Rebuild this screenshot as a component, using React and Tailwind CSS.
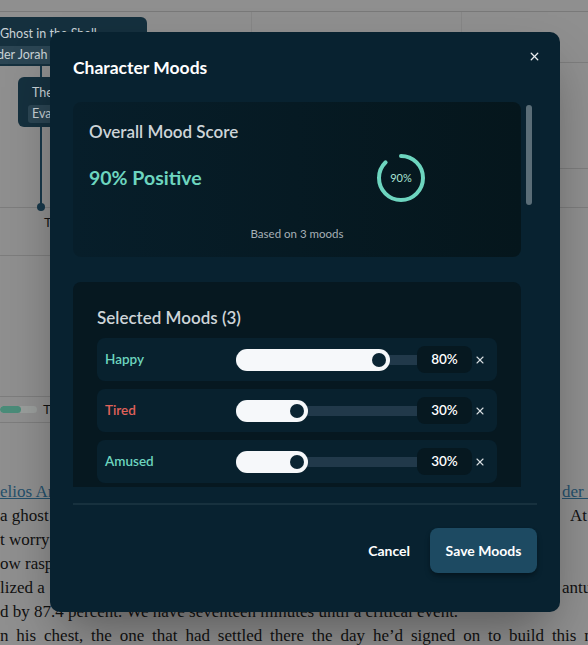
import { X } from 'lucide-react'

const MOODS = [
  { name: 'Happy', value: 80, color: 'text-[#6dd5bf]' },
  { name: 'Tired', value: 30, color: 'text-[#e0625a]' },
  { name: 'Amused', value: 30, color: 'text-[#6dd5bf]' },
]

function ScoreRing({ value }) {
  const r = 22
  const c = 2 * Math.PI * r
  return (
    <div className="relative w-[50px] h-[50px]">
      <svg width="50" height="50" viewBox="0 0 50 50" className="-rotate-90">
        <circle
          cx="25" cy="25" r={r}
          fill="none"
          stroke="#6dd5bf"
          strokeWidth="4"
          strokeLinecap="round"
          strokeDasharray={`${c * value / 100 - 4} ${c}`}
        />
      </svg>
      <span className="absolute inset-0 flex items-center justify-center text-[11px] text-[#a9e3d5]">
        {value}%
      </span>
    </div>
  )
}

function MoodRow({ mood }) {
  const fill = 22 + 165 * mood.value / 100
  return (
    <div className="h-[43px] bg-[#08212e] rounded-[8px] flex items-center pl-2">
      <span className={`w-[131px] text-[13.5px] font-semibold ${mood.color}`}>{mood.name}</span>
      <div className="relative w-[187px] h-[22px] flex items-center">
        <div className="h-[10px] w-full bg-[#21394a]" />
        <div className="absolute left-0 top-0 h-[22px] rounded-full bg-[#f6f8fa] flex items-center justify-end pr-[4px]" style={{ width: fill }}>
          <div className="w-[14px] h-[14px] rounded-full bg-[#0b2533]" />
        </div>
      </div>
      <div className="relative -ml-[6px] w-[55px] h-[27px] rounded-[8px] bg-[#061820] flex items-center justify-center text-[13.5px] font-semibold text-white">
        {mood.value}%
      </div>
      <span className="ml-[2px] w-[12px] flex justify-center text-[#d7dde0]">
        <X size={12} strokeWidth={2.2} />
      </span>
    </div>
  )
}

function Backdrop() {
  return (
    <div className="text-[#111]">
      <div className="h-[12px] border-b border-[#797979]" />
      {/* timeline grid */}
      <div className="relative h-[196px] border-b border-[#7d7d7d]">
        <div className="absolute left-[251px] top-0 bottom-0 w-px bg-[#868686]" />
        <div className="absolute left-[461px] top-0 bottom-0 w-px bg-[#868686]" />
        <div className="absolute left-[560px] right-0 top-[50px] h-px bg-[#7d7d7d]" />
        <div className="absolute left-[560px] right-0 top-[156px] h-px bg-[#7d7d7d]" />
        <div className="absolute left-[40px] top-[54px] w-[2px] h-[142px] bg-[#17384a]" />
        <div className="absolute left-[37px] top-[191px] w-[8px] h-[8px] rounded-full bg-[#17384a]" />
        <div className="absolute -left-[10px] top-[5px] w-[157px] h-[49px] rounded-[6px] bg-[#15303e] pl-[10px] pt-[9px]">
          <div className="text-[12.5px] text-[#c9d2d6] leading-[15px] whitespace-nowrap">Ghost in the Shell</div>
          <div className="mt-[2px] -ml-[12px] inline-block bg-[#2b4553] rounded-[3px] pl-[2px] pr-[6px] text-[12.5px] text-[#c9d2d6] leading-[18px] whitespace-nowrap">nder Jorah</div>
        </div>
        <div className="absolute left-[18px] top-[65px] w-[110px] h-[50px] rounded-[6px] bg-[#15303e] pl-[14px] pt-[8px]">
          <div className="text-[12.5px] text-[#c9d2d6] leading-[15px] whitespace-nowrap">The Anomaly</div>
          <div className="mt-[2px] -ml-[4px] inline-block bg-[#2b4553] rounded-[3px] px-[4px] text-[12.5px] text-[#c9d2d6] leading-[18px] whitespace-nowrap">Eva Lin</div>
        </div>
      </div>
      <div className="h-[48px] w-[60px] border-b border-[#7d7d7d] pl-[44px] pt-[5px] text-[13px] font-['Liberation_Sans',sans-serif]">T</div>
      <div className="h-[141px] w-[60px] border-b border-[#7d7d7d]" />
      <div className="h-[26px] w-[60px] border-b border-[#7d7d7d] flex items-center gap-[6px]">
        <div className="w-[37px] h-[7px] rounded-full bg-[#9a9e9c] overflow-hidden">
          <div className="w-[21px] h-full rounded-full bg-[#4a8c79]" />
        </div>
        <span className="text-[13px] font-['Liberation_Sans',sans-serif]">T</span>
      </div>
      <div className="h-[57px]" />
      <div className="font-['Liberation_Serif',serif] text-[17px] leading-[24px] whitespace-nowrap">
        <div className="flex justify-between">
          <span className="text-[#25506b] underline">elios Array</span>
          <span className="text-[#25506b] underline w-[26px] overflow-hidden">der Jorah</span>
        </div>
        <div className="flex justify-between">
          <span>a ghost</span>
          <span className="w-[18px] overflow-hidden">At first</span>
        </div>
        <div>t worry</div>
        <div>ow rasp</div>
        <div className="flex justify-between">
          <span>lized a</span>
          <span className="w-[26px] overflow-hidden">antum</span>
        </div>
        <div>d by 87.4 percent. We have seventeen minutes until a critical event.</div>
        <div className="[word-spacing:3.6px]">n his chest, the one that had settled there the day he’d signed on to build this machine.</div>
      </div>
    </div>
  )
}

export default function App() {
  return (
    <div className="relative w-[588px] h-[645px] overflow-hidden bg-[#8f8f8f] font-['Lato',sans-serif]">
      <Backdrop />

      {/* Dialog */}
      <div className="absolute left-[50px] top-[32px] w-[510px] h-[580px] rounded-[10px] bg-[#082230] shadow-2xl shadow-black/40 flex flex-col">
        <button className="absolute top-[18px] right-[19px] text-[#e8ecee]">
          <X size={13} strokeWidth={2.4} />
        </button>

        <h2 className="px-[23px] pt-[23px] text-[17.5px] leading-[25px] font-bold text-white">Character Moods</h2>

        <div className="mt-[22px] ml-[23px] w-[464px] h-[385px] flex overflow-hidden">
          <div className="w-[448px] flex flex-col gap-[25px]">
            {/* Overall score */}
            <div className="rounded-[8px] bg-gradient-to-r from-[#071e2a] to-[#05161c] px-4 pt-[18px] pb-[15px]">
              <h3 className="text-[17px] leading-[24px] font-semibold text-[#cdd4d8]">Overall Mood Score</h3>
              <div className="mt-[9px] grid grid-cols-2 items-center">
                <span className="text-[19.5px] font-bold text-[#6dd5bf]">90% Positive</span>
                <div className="flex justify-center">
                  <ScoreRing value={90} />
                </div>
              </div>
              <p className="mt-[23px] text-center text-[11.5px] leading-[16px] text-[#a6b0b6]">Based on 3 moods</p>
            </div>

            {/* Selected moods */}
            <div className="shrink-0 rounded-[8px] bg-[#061820] px-6 pt-[24px] pb-6">
              <h3 className="text-[17px] leading-[24px] font-semibold text-[#cdd4d8]">Selected Moods (3)</h3>
              <div className="mt-[8px] flex flex-col gap-[8px]">
                {MOODS.map(m => <MoodRow key={m.name} mood={m} />)}
              </div>
            </div>
          </div>
          <div className="w-[16px] pl-[5px] pt-[3px]">
            <div className="w-[6px] h-[100px] rounded-full bg-[#5a6d77]" />
          </div>
        </div>

        <div className="mx-[23px] mt-[16px] h-[2px] bg-[#17313e]" />

        <div className="mt-[23px] px-[23px] flex justify-end items-center gap-[20px]">
          <button className="text-[14px] font-bold text-white">Cancel</button>
          <button className="w-[107px] h-[45px] rounded-[8px] bg-[#1d4a62] text-[14px] font-bold text-white shadow-md shadow-black/30">
            Save Moods
          </button>
        </div>
      </div>
    </div>
  )
}
